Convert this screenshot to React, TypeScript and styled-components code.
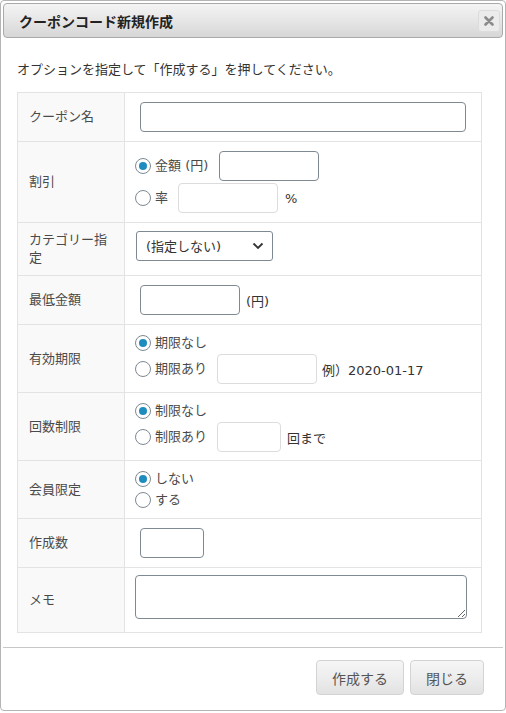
import styled, { createGlobalStyle } from 'styled-components';

const FONT = '"DejaVu Sans", "Noto Sans CJK JP", "Liberation Sans", sans-serif';

const GlobalStyle = createGlobalStyle`
  html, body {
    margin: 0;
    padding: 0;
    background: #fff;
  }
  body {
    font-family: ${FONT};
    font-size: 13px;
    color: #333;
  }
  * {
    box-sizing: border-box;
  }
`;

const Dialog = styled.div`
  width: 506px;
  height: 711px;
  border: 1px solid #b4b4b4;
  border-radius: 4px;
  padding: 2px;
  display: flex;
  flex-direction: column;
  background: #fff;
`;

const TitleBar = styled.div`
  height: 35px;
  border: 1px solid #aaa;
  border-radius: 4px;
  background: linear-gradient(to bottom, #f4f4f4 0%, #e6e6e6 50%, #d6d6d6 100%);
  display: flex;
  align-items: center;
  justify-content: space-between;
  padding: 0 2px 0 15px;
`;

const Title = styled.span`
  font-weight: 700;
  font-size: 14px;
  color: #222;
`;

const CloseButton = styled.button`
  width: 22px;
  height: 22px;
  border: 1px solid #dcdcdc;
  border-radius: 3px;
  background: #ebebeb;
  display: flex;
  align-items: center;
  justify-content: center;
  padding: 0;
  cursor: pointer;
`;

const Content = styled.div`
  flex: 1;
  padding: 22px 0 0 14px;
`;

const Intro = styled.p`
  margin: 0 0 12px;
  line-height: 20px;
  font-size: 13px;
  color: #333;
`;

const FormTable = styled.table`
  width: 465px;
  border-collapse: collapse;
  border: 1px solid #e3e3e3;
`;

const LabelCell = styled.th`
  width: 107px;
  background: #f9f9f9;
  border: 1px solid #e3e3e3;
  padding: 8px 8px 8px 11px;
  text-align: left;
  font-weight: 400;
  font-size: 13px;
  line-height: 18px;
  color: #4a4a4a;
  vertical-align: middle;
`;

const ValueCell = styled.td<{ $bottom?: number }>`
  border: 1px solid #e3e3e3;
  padding: 9px 10px ${(p) => p.$bottom ?? 9}px 10px;
  vertical-align: middle;
`;

const Stack = styled.div<{ $gap?: number }>`
  display: flex;
  flex-direction: column;
  gap: ${(p) => p.$gap ?? 2}px;
`;

const Line = styled.div<{ $indent?: number }>`
  display: flex;
  align-items: center;
  min-height: 18px;
  padding-left: ${(p) => p.$indent ?? 0}px;
  font-size: 13px;
  color: #333;
`;

const RadioLabel = styled.label`
  display: inline-flex;
  align-items: center;
  gap: 4px;
  line-height: 18px;
  color: #4a4a4a;
`;

const RadioCircle = styled.span<{ $checked?: boolean }>`
  width: 16px;
  height: 16px;
  border-radius: 50%;
  border: 1px solid #7e8993;
  background: #fff;
  display: inline-flex;
  align-items: center;
  justify-content: center;
  &::after {
    content: '';
    width: 8px;
    height: 8px;
    border-radius: 50%;
    background: ${(p) => (p.$checked ? '#1e8cbe' : 'transparent')};
  }
`;

const TextInput = styled.input<{ $width: number; $muted?: boolean }>`
  width: ${(p) => p.$width}px;
  height: 30px;
  border: 1px solid ${(p) => (p.$muted ? '#dcdcde' : '#7e8993')};
  border-radius: 4px;
  background: #fff;
  padding: 0 8px;
  font: inherit;
  margin: 0;
`;

const Suffix = styled.span<{ $left: number }>`
  margin-left: ${(p) => p.$left}px;
  color: #333;
`;

const Select = styled.div`
  width: 137px;
  height: 30px;
  border: 1px solid #7e8993;
  border-radius: 3px;
  display: flex;
  align-items: center;
  justify-content: space-between;
  padding: 0 8px 0 9px;
  margin: -7px 0 0 1px;
  color: #333;
  font-size: 13px;
`;

const Memo = styled.textarea`
  display: block;
  width: 332px;
  height: 44px;
  border: 1px solid #7e8993;
  border-radius: 4px;
  margin: -2px 0 0;
  resize: vertical;
  font: inherit;
`;

const ButtonPane = styled.div`
  border-top: 1px solid #c8c8c8;
  display: flex;
  justify-content: flex-end;
  gap: 6px;
  padding: 12px 19px 13px 0;
`;

const PaneButton = styled.button<{ $width: number }>`
  width: ${(p) => p.$width}px;
  height: 35px;
  border: 1px solid #d3d3d3;
  border-radius: 4px;
  background: linear-gradient(to bottom, #f6f6f6 0%, #ececec 55%, #e2e2e2 100%);
  font-family: ${FONT};
  font-size: 14px;
  color: #555;
  cursor: pointer;
  padding: 0;
`;

const Radio: React.FC<{ checked?: boolean; label: string }> = ({ checked, label }) => (
  <RadioLabel>
    <RadioCircle $checked={checked} />
    {label}
  </RadioLabel>
);

const App = () => {
  return (
    <>
      <GlobalStyle />
      <Dialog>
        <TitleBar>
          <Title>クーポンコード新規作成</Title>
          <CloseButton aria-label="close">
            <svg width="10" height="10" viewBox="0 0 10 10">
              <path d="M1.5 1.5 L8.5 8.5 M8.5 1.5 L1.5 8.5" stroke="#8a8a8a" strokeWidth="2.6" strokeLinecap="round" />
            </svg>
          </CloseButton>
        </TitleBar>
        <Content>
          <Intro>オプションを指定して「作成する」を押してください。</Intro>
          <FormTable>
            <tbody>
              <tr>
                <LabelCell>クーポン名</LabelCell>
                <ValueCell>
                  <Line $indent={5}>
                    <TextInput $width={326} />
                  </Line>
                </ValueCell>
              </tr>
              <tr>
                <LabelCell>割引</LabelCell>
                <ValueCell>
                  <Stack>
                    <Line>
                      <Radio checked label="金額 (円)" />
                      <Suffix $left={11}>
                        <TextInput $width={100} />
                      </Suffix>
                    </Line>
                    <Line>
                      <Radio label="率" />
                      <Suffix $left={10}>
                        <TextInput $width={100} $muted />
                      </Suffix>
                      <Suffix $left={7}>%</Suffix>
                    </Line>
                  </Stack>
                </ValueCell>
              </tr>
              <tr>
                <LabelCell>カテゴリー指定</LabelCell>
                <ValueCell>
                  <Select>
                    <span>(指定しない)</span>
                    <svg width="12" height="8" viewBox="0 0 12 8">
                      <path d="M1.5 1.5 L6 6 L10.5 1.5" fill="none" stroke="#333" strokeWidth="1.8" />
                    </svg>
                  </Select>
                </ValueCell>
              </tr>
              <tr>
                <LabelCell>最低金額</LabelCell>
                <ValueCell>
                  <Line $indent={5}>
                    <TextInput $width={100} />
                    <Suffix $left={6}>(円)</Suffix>
                  </Line>
                </ValueCell>
              </tr>
              <tr>
                <LabelCell>有効期限</LabelCell>
                <ValueCell $bottom={8}>
                  <Stack>
                    <Line>
                      <Radio checked label="期限なし" />
                    </Line>
                    <Line>
                      <Radio label="期限あり" />
                      <Suffix $left={10}>
                        <TextInput $width={100} $muted />
                      </Suffix>
                      <Suffix $left={5}>例）2020-01-17</Suffix>
                    </Line>
                  </Stack>
                </ValueCell>
              </tr>
              <tr>
                <LabelCell>回数制限</LabelCell>
                <ValueCell $bottom={8}>
                  <Stack>
                    <Line>
                      <Radio checked label="制限なし" />
                    </Line>
                    <Line>
                      <Radio label="制限あり" />
                      <Suffix $left={10}>
                        <TextInput $width={64} $muted />
                      </Suffix>
                      <Suffix $left={6}>回まで</Suffix>
                    </Line>
                  </Stack>
                </ValueCell>
              </tr>
              <tr>
                <LabelCell>会員限定</LabelCell>
                <ValueCell>
                  <Stack $gap={3}>
                    <Line>
                      <Radio checked label="しない" />
                    </Line>
                    <Line>
                      <Radio label="する" />
                    </Line>
                  </Stack>
                </ValueCell>
              </tr>
              <tr>
                <LabelCell>作成数</LabelCell>
                <ValueCell>
                  <Line $indent={5}>
                    <TextInput $width={64} />
                  </Line>
                </ValueCell>
              </tr>
              <tr>
                <LabelCell>メモ</LabelCell>
                <ValueCell $bottom={13}>
                  <Memo />
                </ValueCell>
              </tr>
            </tbody>
          </FormTable>
        </Content>
        <ButtonPane>
          <PaneButton $width={88}>作成する</PaneButton>
          <PaneButton $width={74}>閉じる</PaneButton>
        </ButtonPane>
      </Dialog>
    </>
  );
};

export default App;
